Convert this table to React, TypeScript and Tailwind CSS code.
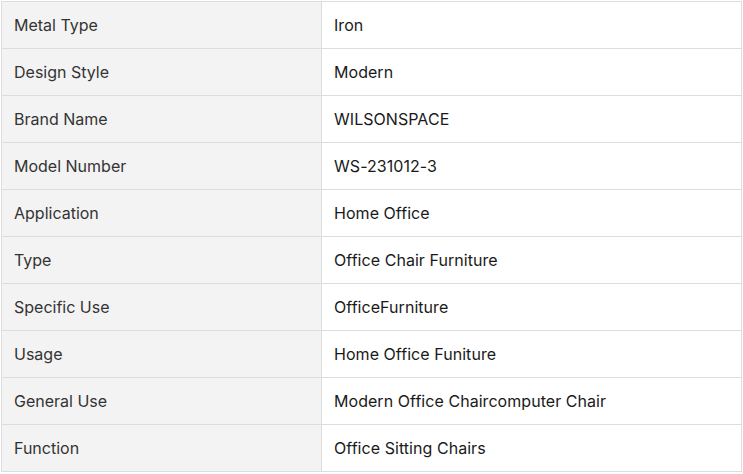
import React from 'react';

const rows: [string, string][] = [
  ['Metal Type', 'Iron'],
  ['Design Style', 'Modern'],
  ['Brand Name', 'WILSONSPACE'],
  ['Model Number', 'WS-231012-3'],
  ['Application', 'Home Office'],
  ['Type', 'Office Chair Furniture'],
  ['Specific Use', 'OfficeFurniture'],
  ['Usage', 'Home Office Funiture'],
  ['General Use', 'Modern Office Chaircomputer Chair'],
  ['Function', 'Office Sitting Chairs'],
];

export default function App() {
  return (
    <div className="min-h-screen bg-white pt-px pl-px" style={{ fontFamily: 'Inter, "Noto Sans", sans-serif' }}>
      <div className="w-[741px] border border-[#dddddd]">
        {rows.map(([label, value], i) => (
          <div
            key={label}
            className={`grid grid-cols-[320px_1fr] ${i < rows.length - 1 ? 'h-[47px] border-b border-[#dddddd]' : 'h-[46px]'}`}
          >
            <div className="flex items-center bg-[#f3f3f3] border-r border-[#dddddd] pl-3 text-[16px] text-[#333333]">
              {label}
            </div>
            <div className="flex items-center pl-3 text-[16px] tracking-[0.05px] text-[#1a1a1a]">{value}</div>
          </div>
        ))}
      </div>
    </div>
  );
}
